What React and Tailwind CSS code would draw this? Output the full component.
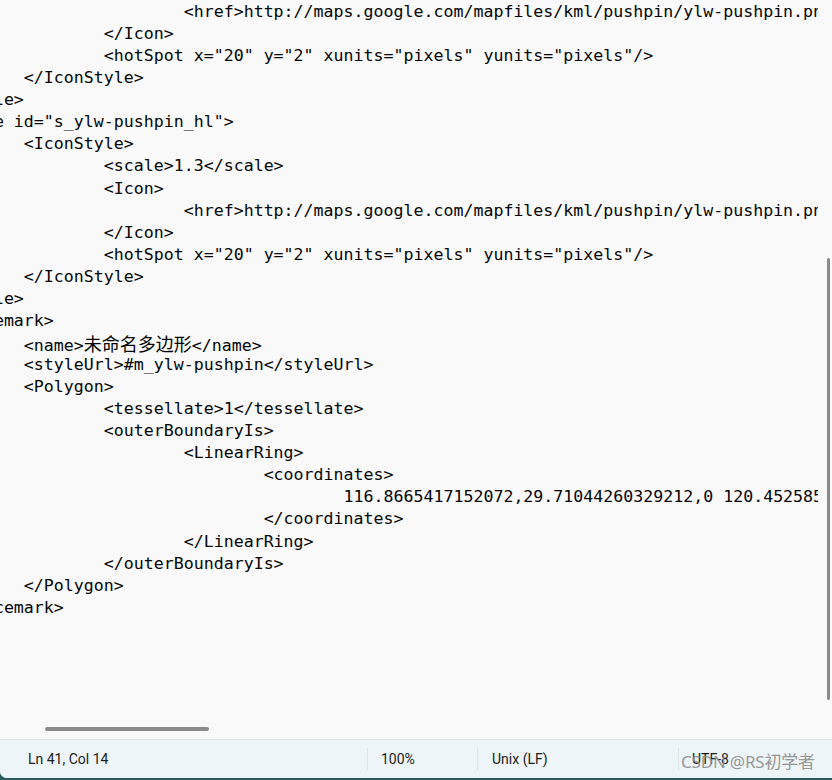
import React from 'react';

const lines = [
    [4, '<href>http://maps.google.com/mapfiles/kml/pushpin/ylw-pushpin.png</href>'],
    [3, '</Icon>'],
    [3, '<hotSpot x="20" y="2" xunits="pixels" yunits="pixels"/>'],
    [2, '</IconStyle>'],
    [1, '</Style>'],
    [1, '<Style id="s_ylw-pushpin_hl">'],
    [2, '<IconStyle>'],
    [3, '<scale>1.3</scale>'],
    [3, '<Icon>'],
    [4, '<href>http://maps.google.com/mapfiles/kml/pushpin/ylw-pushpin.png</href>'],
    [3, '</Icon>'],
    [3, '<hotSpot x="20" y="2" xunits="pixels" yunits="pixels"/>'],
    [2, '</IconStyle>'],
    [1, '</Style>'],
    [1, '<Placemark>'],
    [2, 'NAME'],
    [2, '<styleUrl>#m_ylw-pushpin</styleUrl>'],
    [2, '<Polygon>'],
    [3, '<tessellate>1</tessellate>'],
    [3, '<outerBoundaryIs>'],
    [4, '<LinearRing>'],
    [5, '<coordinates>'],
    [6, '116.8665417152072,29.71044260329212,0 120.4525851239487,30.12345678901234,0'],
    [5, '</coordinates>'],
    [4, '</LinearRing>'],
    [3, '</outerBoundaryIs>'],
    [2, '</Polygon>'],
    [1, '</Placemark>'],
];

const Line = ({ level, text }) => {
    // tabs are 8 columns wide
    const pad = ' '.repeat(8 * level);
    if (text === 'NAME') {
        return (
            <div className="whitespace-pre h-[22.07px]">
                {pad}{'<name>'}
                <span className="text-[18px] font-['Noto_Sans_CJK_SC',sans-serif]">未命名多边形</span>
                {'</name>'}
            </div>
        );
    }
    return <div className="whitespace-pre h-[22.07px]">{pad}{text}</div>;
};

export default function App() {
    return (
        <div className="w-[832px] h-[780px] flex flex-col bg-[#2c5b5f] overflow-hidden">
            <div className="flex-1 flex flex-col bg-[#f9f9f9] rounded-bl-[7px] overflow-hidden">
                {/* editor, scrolled sideways so the first tab stop is off screen */}
                <div className="relative h-[739px] overflow-hidden">
                    <div className="w-[818px] overflow-hidden pt-[1px]">
                        <div className="ml-[-136px] text-[16.6px] leading-[22.07px] text-[#050505] font-['DejaVu_Sans_Mono','Liberation_Mono',monospace]">
                            {lines.map(([lvl, text], i) => (
                                <Line key={i} level={lvl} text={text} />
                            ))}
                        </div>
                    </div>

                    {/* vertical scrollbar */}
                    <div className="absolute right-[2px] top-[258px] h-[442px] w-[3px] rounded-full bg-[#8b8b8b]" />
                    {/* horizontal scrollbar */}
                    <div className="absolute left-[45px] top-[727px] w-[164px] h-[4px] rounded-full bg-[#8b8b8b]" />
                </div>

                {/* status bar */}
                <div className="relative flex-1 flex items-center border-t border-[#e2e8ea] bg-[#eef5f8] text-[14px] text-[#1c1c1c] font-['Roboto',sans-serif]">
                    <div className="w-[367px] pl-[28px]">Ln 41, Col 14</div>
                    <div className="h-[22px] w-px bg-[#dde3e6]" />
                    <div className="w-[109px] pl-[13px]">100%</div>
                    <div className="h-[22px] w-px bg-[#dde3e6]" />
                    <div className="w-[200px] pl-[14px]">Unix (LF)</div>
                    <div className="h-[22px] w-px bg-[#dde3e6]" />
                    <div className="pl-[13px]">UTF-8</div>

                    {/* watermark */}
                    <div className="absolute left-[681px] top-[9px] text-[17px] text-[#8a8a8a]/90 font-['Noto_Sans','Noto_Sans_CJK_SC',sans-serif] tracking-[-0.2px]">
                        CSDN @RS初学者
                    </div>
                </div>
            </div>
            <div className="h-[2px]" />
        </div>
    );
}
